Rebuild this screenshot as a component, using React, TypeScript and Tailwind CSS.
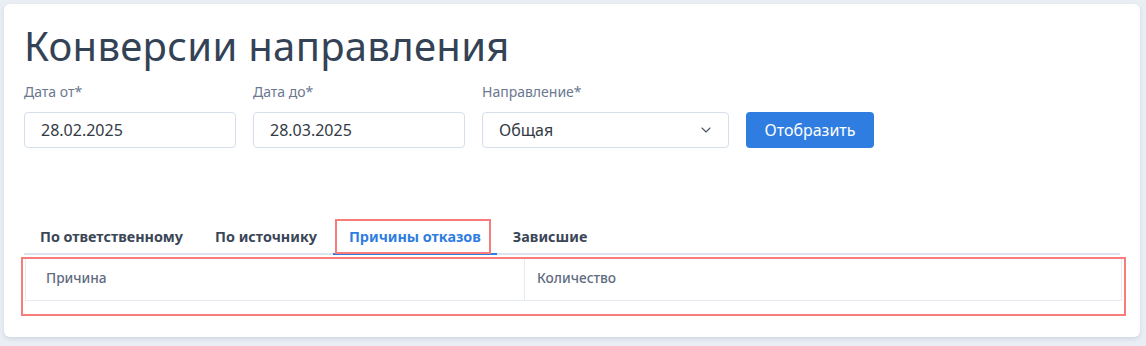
import React from "react";
import { ChevronDown } from "lucide-react";

const tabs = ["По ответственному", "По источнику", "Причины отказов", "Зависшие"];

const Field: React.FC<{ label: string; className: string; children: React.ReactNode }> = ({
  label,
  className,
  children,
}) => (
  <div className={`flex flex-col ${className}`}>
    <label className="text-[14px] leading-[18px] text-[#6b7890] mb-[11px]">{label}</label>
    {children}
  </div>
);

const App: React.FC = () => {
  return (
    <div
      className="min-h-[346px] w-[1146px] bg-[#e9eef5] p-1 pr-[6px] pb-[9px]"
      style={{ fontFamily: '"Noto Sans", "Open Sans", sans-serif' }}
    >
      <div className="rounded-md bg-white px-5 pt-[14px] pb-[21px] shadow-[0_2px_4px_rgba(30,50,90,0.12)]">
        {/* Title */}
        <h1 className="text-[40px] leading-[56px] text-[#344256] tracking-[0.3px]">Конверсии направления</h1>

        {/* Filters */}
        <div className="mt-[9px] flex items-end gap-[17px]">
          <Field label="Дата от*" className="w-[212px]">
            <div className="flex h-9 items-center rounded border border-[#d5dfec] px-4 text-[16px] text-[#333a44]">
              28.02.2025
            </div>
          </Field>
          <Field label="Дата до*" className="w-[212px]">
            <div className="flex h-9 items-center rounded border border-[#d5dfec] px-4 text-[16px] text-[#333a44]">
              28.03.2025
            </div>
          </Field>
          <Field label="Направление*" className="w-[247px]">
            <div className="flex h-9 items-center justify-between rounded border border-[#d5dfec] pl-4 pr-[14px] text-[16px] text-[#333a44]">
              <span>Общая</span>
              <ChevronDown size={16} strokeWidth={1.6} className="text-[#4b5563]" />
            </div>
          </Field>
          <button className="h-9 w-[128px] rounded bg-[#2f7de1] text-[16px] text-white">Отобразить</button>
        </div>

        {/* Tabs */}
        <div className="mt-[71px] flex border-b-2 border-[#dce4ef]">
          {tabs.map((t) => {
            const active = t === "Причины отказов";
            return (
              <div
                key={t}
                className={`relative -mb-[2px] px-4 pt-[8px] pb-[6px] text-[14.35px] font-bold leading-[20px] ${
                  active ? "border-b-2 border-[#2f7de1] text-[#2f7de1]" : "border-b-2 border-transparent text-[#3b4657]"
                }`}
              >
                {t}
                {active && (
                  <span className="pointer-events-none absolute left-[2px] right-[6px] top-0 bottom-[-1px] border-2 border-[#f87c7c]" />
                )}
              </div>
            );
          })}
        </div>

        {/* Table */}
        <div className="mt-[2px] -ml-[3px] mr-[-6px] border-2 border-[#f87c7c] px-[2px] pb-[13px]">
          <div className="grid grid-cols-[498px_1fr] border-x border-b border-[#e6ebf2]">
            <div className="pl-[20px] pr-[13px] pt-[9px] pb-[12px] text-[13.7px] font-medium leading-[20px] text-[#5f6b7f]">
              Причина
            </div>
            <div className="border-l border-[#e6ebf2] pl-[12px] pr-[13px] pt-[9px] pb-[12px] text-[13.7px] font-medium leading-[20px] text-[#5f6b7f]">
              Количество
            </div>
          </div>
        </div>
      </div>
    </div>
  );
};

export default App;
